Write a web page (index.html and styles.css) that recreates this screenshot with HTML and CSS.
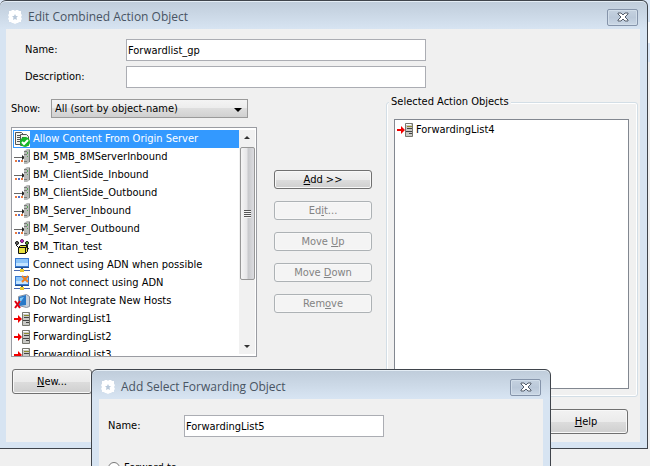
FILE: index.html
```html
<!DOCTYPE html>
<html lang="en">
<head>
  <meta charset="UTF-8" />
  <meta name="viewport" content="width=device-width, initial-scale=1" />
  <title>Edit Combined Action Object</title>
  <link rel="stylesheet" href="styles.css">
</head>
<body>
  <!-- Shared icons -->
  <svg class="icon-defs" aria-hidden="true">
    <symbol id="badge" viewBox="0 0 14 14">
      <path fill="#fff" d="M1 1h2l1-1h2l1 1 1-1h2l1 1h2v3l1 1-1 2 1 2-1 1v2h-2l-1 1H9l-2 1-2-1H4l-1-1H1v-2l-1-1 1-2-1-2 1-1z"/>
      <path fill="#b9c9da" d="M7 4l1 2h2L8.500 7.500 9 10 7 9l-2 1 .5-2.500L4 6h2z"/>
    </symbol>
    <symbol id="close" viewBox="0 0 12 10">
      <path d="M1 1h3l2 2 2-2h3v1L8 5l3 3v1H8L6 7 4 9H1V8l3-3-3-3z" fill="#fff" stroke="#525c6b"/>
    </symbol>
    <symbol id="forward" viewBox="0 0 16 16">
      <path fill="#f00000" d="M0 7h4V4l4 4-4 4V9H0z"/>
      <path fill="#c9c9c5" stroke="#77776f" d="M8.500 1.500h7v13h-7z"/>
      <path fill="#fff" d="M9 2h5v1H9z"/>
      <path fill="#8c8c30" d="M10 4h5v1h-5z"/>
      <path fill="#444" d="M10 6h5v1h-5zM9 9h6v1H9zM12 11h3v1h-3z"/>
    </symbol>
    <symbol id="bandwidth" viewBox="0 0 16 16">
      <path fill="#666" d="M0 8h8v1H0z"/>
      <path fill="#222" d="M8 6l3 2.500L8 11z"/>
      <path fill="#e87840" d="M1 11h2v2H1zM7 11h2v2H7z"/>
      <path fill="#5070c8" d="M4 11h2v2H4z"/>
      <path fill="#b8bab8" d="M10 2l3-2h3v13l-3 2h-3z"/>
      <path fill="#787c78" d="M10 2h3v1h-3zM10 5h3v1h-3zM10 12h3v1h-3zM15 1h1v12h-1z"/>
      <path fill="#58a858" d="M13 3h1v2h-1zM13 7h1v1h-1z"/>
    </symbol>
    <symbol id="network" viewBox="0 0 16 16">
      <path fill="#3878d0" d="M1 1h14v10H1z"/>
      <path fill="#8cc4f8" d="M2 2h12v4H2z"/>
      <path fill="#c4e4ff" d="M2 6h12v3H2z"/>
      <path fill="#205090" d="M1 10h14v1H1zM7 11h2v2H7z"/>
      <path fill="#4868b0" d="M0 13h16v1H0z"/>
      <path fill="#e8c830" d="M6 12h4v3H6z"/>
    </symbol>
  </svg>

  <main class="window main-window">
    <header class="titlebar">
      <svg class="badge"><use href="#badge"/></svg>
      <h1>Edit Combined Action Object</h1>
      <button class="close-btn" aria-label="Close"><svg><use href="#close"/></svg></button>
    </header>
    <div class="client">
      <div class="fields">
        <label for="name">Name:</label>
        <input type="text" id="name" value="Forwardlist_gp" />
        <label for="description">Description:</label>
        <input type="text" id="description" />
      </div>

      <div class="columns">
        <section class="available">
          <div class="show-row">
            <label for="show">Show:</label>
            <div class="select-box">
              <select id="show"><option>All (sort by object-name)</option></select>
            </div>
          </div>
          <div class="listbox">
            <ul>
              <li class="selected">
                <svg>
                  <path fill="#fff" d="M0 0h16v16H0z"/>
                  <path fill="#f4f4ec" stroke="#555" d="M1.500 1.500h6l2 2v10h-8z"/>
                  <path fill="#f4f4ec" stroke="#555" d="M6.500 3.500h6l2 2v9h-8z"/>
                  <path fill="#555" d="M3 4h3v1H3zM3 6h3v1H3zM3 8h3v1H3zM3 10h3v1H3zM8 6h4v1H8z"/>
                  <circle cx="11" cy="11" r="5" fill="#18b828"/>
                  <path fill="none" stroke="#fff" stroke-width="2" d="M8 11l2 2 4-4"/>
                </svg>
                Allow Content From Origin Server
              </li>
              <li><svg><use href="#bandwidth"/></svg>BM_5MB_8MServerInbound</li>
              <li><svg><use href="#bandwidth"/></svg>BM_ClientSide_Inbound</li>
              <li><svg><use href="#bandwidth"/></svg>BM_ClientSide_Outbound</li>
              <li><svg><use href="#bandwidth"/></svg>BM_Server_Inbound</li>
              <li><svg><use href="#bandwidth"/></svg>BM_Server_Outbound</li>
              <li>
                <svg>
                  <path fill="#e8e040" stroke="#111" d="M4.500 8.500l2-2h7l-2 2zM4.500 8.500h7v6h-7zM11.500 8.500l2-2v6l-2 2z"/>
                  <path fill="none" stroke="#111" d="M4 8L2 6M12 8l3 2"/>
                  <circle cx="3" cy="4" r="1.500" fill="#777" stroke="#111"/>
                  <circle cx="8" cy="2" r="1.500" fill="#e030d0" stroke="#602060"/>
                  <circle cx="13" cy="4" r="1.500" fill="#60c030" stroke="#111"/>
                </svg>
                BM_Titan_test
              </li>
              <li><svg><use href="#network"/></svg>Connect using ADN when possible</li>
              <li>
                <svg>
                  <use href="#network"/>
                  <path fill="none" stroke="#f08020" stroke-width="2" d="M8 1l6 6M14 1L8 7"/>
                </svg>
                Do not connect using ADN
              </li>
              <li>
                <svg>
                  <path fill="#c8d0dc" stroke="#8890a0" d="M4.500 3.500l8-2 3 2v10l-3 1-8-2z"/>
                  <path fill="#2878c8" d="M5 4l7-2v10l-7 1z"/>
                  <path fill="#80c8f8" d="M6 5l4-1-4 6z"/>
                  <path fill="none" stroke="#e00010" stroke-width="2" d="M1 8l5 7M6 8l-5 7"/>
                </svg>
                Do Not Integrate New Hosts
              </li>
              <li><svg><use href="#forward"/></svg>ForwardingList1</li>
              <li><svg><use href="#forward"/></svg>ForwardingList2</li>
              <li><svg><use href="#forward"/></svg>ForwardingList3</li>
            </ul>
            <div class="scrollbar">
              <span class="arrow up"></span>
              <div class="thumb"><span class="grip"></span></div>
              <span class="arrow down"></span>
            </div>
          </div>
          <button class="btn large new-btn"><u>N</u>ew...</button>
        </section>

        <div class="actions">
          <button class="btn"><u>A</u>dd &gt;&gt;</button>
          <button class="btn" disabled>Ed<u>i</u>t...</button>
          <button class="btn" disabled>Move <u>U</u>p</button>
          <button class="btn" disabled>Move <u>D</u>own</button>
          <button class="btn" disabled>Rem<u>o</u>ve</button>
        </div>

        <section class="chosen">
          <div class="group">
            <h2>Selected Action Objects</h2>
            <ul>
              <li><svg><use href="#forward"/></svg>ForwardingList4</li>
            </ul>
          </div>
          <button class="btn large help-btn"><u>H</u>elp</button>
        </section>
      </div>
    </div>
  </main>

  <!-- Child dialog, floats over the main window -->
  <div class="window child-window" role="dialog" aria-labelledby="child-title">
    <header class="titlebar">
      <svg class="badge"><use href="#badge"/></svg>
      <h1 id="child-title">Add Select Forwarding Object</h1>
      <button class="close-btn" aria-label="Close"><svg><use href="#close"/></svg></button>
    </header>
    <div class="client">
      <div class="child-row">
        <label for="child-name">Name:</label>
        <input type="text" id="child-name" value="ForwardingList5" />
      </div>
      <div class="radio-row">
        <input type="radio" id="forward-to" name="mode" />
        <label for="forward-to">Forward to:</label>
      </div>
    </div>
  </div>
</body>
</html>
```
FILE: styles.css
```css
* {
  box-sizing: border-box;
}
body {
  height: 100vh;
  margin: 0;
  overflow: hidden;
  position: relative;
  font-family: Tahoma, "DejaVu Sans Condensed", sans-serif;
  font-size: 11px;
  line-height: 14px;
  color: #000;
  background: linear-gradient(#dce8f7 22px, #fff 22px, #fff 43px, #dce8f7 43px, #dce8f7 62px, #f0f0f0 62px);
}
h1, h2, ul {
  margin: 0;
  padding: 0;
  font-weight: normal;
}
button, input, select {
  font: inherit;
  color: inherit;
}
.icon-defs {
  position: absolute;
  width: 0;
  height: 0;
}

/* Window frame */
.window {
  border: 1px solid #3f444b;
  border-radius: 6px 6px 0 0;
  background: #d7e4f2;
  background-image: linear-gradient(#bfccda, #d7e4f2 28px);
  box-shadow: inset 0 1px #e4edf5;
}
.main-window {
  margin-right: 2px;
  padding: 0 7px 6px 6px;
  border-left: none;
}
.child-window {
  position: absolute;
  left: 91px;
  right: 99px;
  top: 369px;
  padding: 0 7px 6px;
}
.titlebar {
  display: flex;
  align-items: center;
  height: 28px;
  padding: 4px 2px 0;
}
.child-window .titlebar {
  height: 29px;
  padding-top: 5px;
}
.titlebar h1 {
  flex: 1;
  padding-left: 6px;
  font-family: "Segoe UI", "Open Sans", sans-serif;
  font-size: 12px;
  line-height: 16px;
  color: #485463;
}
.badge {
  width: 14px;
  height: 14px;
}
.close-btn {
  display: flex;
  align-items: center;
  justify-content: center;
  width: 31px;
  height: 17px;
  padding: 0;
  border: 1px solid #8594aa;
  border-radius: 2px;
  background: linear-gradient(#c5d2e0, #bac8d9 50%, #cbd8e6);
  box-shadow: inset 0 0 0 1px #d2deea;
}
.close-btn svg {
  width: 12px;
  height: 10px;
}
.client {
  background: #f0f0f0;
}
.main-window .client {
  padding: 10px 2px 8px 5px;
}

/* Form fields */
.fields {
  display: grid;
  grid-template-columns: 101px 300px;
  row-gap: 5px;
  align-items: center;
  padding-left: 14px;
  margin-bottom: 11px;
}
input[type="text"] {
  width: 100%;
  height: 22px;
  margin: 0;
  padding: 0 1px;
  border: 1px solid #abadb3;
  background: #fff;
}
.columns {
  display: grid;
  grid-template-columns: 246px 101px 1fr;
  column-gap: 14px;
}
.show-row {
  display: flex;
  align-items: center;
  justify-content: space-between;
  padding-right: 9px;
  margin-bottom: 9px;
}
.select-box {
  position: relative;
  width: 197px;
}
.select-box::after {
  content: "";
  position: absolute;
  right: 6px;
  top: 9px;
  border: 4px solid transparent;
  border-top-color: #000;
  border-bottom: none;
}
select {
  display: block;
  appearance: none;
  width: 100%;
  height: 19px;
  padding: 0 3px;
  border: 1px solid #9a9a9a;
  border-radius: 0;
  background: linear-gradient(#f4f4f4, #ececec 50%, #dedede 50%, #d0d0d0);
}

/* Lists */
.listbox {
  display: flex;
  height: 230px;
  padding: 2px 1px;
  border: 1px solid #9a9ca2;
  background: #fff;
  overflow: hidden;
}
.listbox ul {
  flex: 1;
}
li {
  display: flex;
  align-items: center;
  gap: 3px;
  height: 18px;
  padding-left: 1px;
  white-space: nowrap;
}
li svg {
  width: 16px;
  height: 16px;
}
.selected {
  color: #fff;
  background: #3399ff;
}
.scrollbar {
  display: flex;
  flex-direction: column;
  align-items: center;
  justify-content: space-between;
  width: 16px;
  background: #f1f1f1;
}
.arrow {
  margin: 6px 0;
  border: 3px solid transparent;
}
.up {
  border-bottom-color: #333;
  border-top: none;
}
.down {
  border-top-color: #333;
  border-bottom: none;
}
.thumb {
  display: flex;
  align-items: center;
  justify-content: center;
  width: 15px;
  height: 133px;
  margin: 2px 0 auto;
  border: 1px solid #979797;
  border-radius: 2px;
  background: linear-gradient(90deg, #f5f5f5, #e6e6e8 45%, #c8c9cc 55%, #dcdce0);
}
.grip {
  width: 7px;
  height: 8px;
  background: repeating-linear-gradient(#555 0 1px, #f4f4f4 1px 2px);
}

/* Buttons */
.btn {
  height: 19px;
  padding: 0;
  border: 1px solid #707070;
  border-radius: 3px;
  background: linear-gradient(#f2f2f2, #ebebeb 50%, #dddddd 50%, #cfcfcf);
  box-shadow: inset 0 0 0 1px #f8f8f8;
}
.btn:disabled {
  border-color: #adb2b5;
  background: #f4f4f4;
  color: #838383;
}
.large {
  display: block;
  width: 80px;
  height: 25px;
}
.new-btn {
  margin: 12px 0 0 1px;
}
.actions {
  display: flex;
  flex-direction: column;
  gap: 12px;
  padding: 71px 0 0 3px;
}
.help-btn {
  width: 84px;
  margin: 12px 10px 0 auto;
}

/* Selected objects */
.chosen {
  margin-top: -4px;
}
.group {
  position: relative;
  margin-top: 7px;
  padding: 16px 8px 7px 7px;
  border: 1px solid #d3dee6;
  border-radius: 3px;
  box-shadow: inset 0 0 0 1px #fff;
}
.group h2 {
  position: absolute;
  left: 2px;
  top: -8px;
  padding: 0 2px;
  font-size: 11px;
  background: #f0f0f0;
}
.group ul {
  height: 270px;
  padding: 1px;
  border: 1px solid #828790;
  background: #fff;
}

/* Child dialog */
.child-window .client {
  padding: 16px 9px;
}
.child-row {
  display: grid;
  grid-template-columns: 76px 200px;
  align-items: center;
}
.radio-row {
  display: flex;
  align-items: center;
  gap: 4px;
  margin-top: 24px;
}
.radio-row input {
  width: 12px;
  height: 12px;
  margin: 0;
}
```
